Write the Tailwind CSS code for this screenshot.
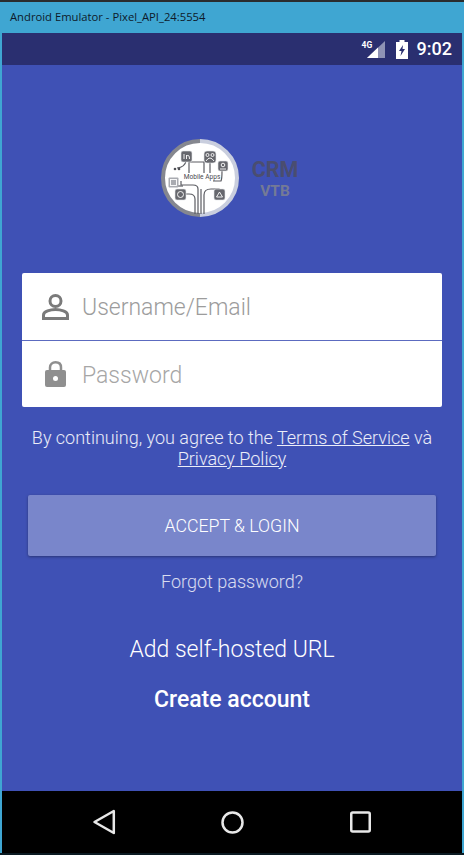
<!DOCTYPE html>
<html lang="en">
<head>
  <meta charset="UTF-8" />
  <meta name="viewport" content="width=device-width, initial-scale=1.0" />
  <title>CRM VTB Login</title>
  <script src="https://cdn.jsdelivr.net/npm/@tailwindcss/browser@4"></script>
</head>
<body class="bg-[#0b1a22] font-['Roboto',sans-serif] overflow-hidden">
  <div class="w-[464px] h-[855px] flex flex-col">
    <!-- Emulator title bar -->
    <div class="h-[2px] bg-[#2a2c2e]"></div>
    <div class="h-[31px] bg-[#3fa6d2] pl-[10px] flex items-center font-['Open_Sans',sans-serif] text-[11.25px] text-[#0e1a2a]">Android Emulator - Pixel_API_24:5554</div>

    <div class="flex-1 flex flex-col border-x-2 border-[#3fa6d2]">
      <!-- Status bar -->
      <div class="h-[32px] bg-[#2a2f70] flex items-center justify-end pr-[10px] text-white">
        <div class="relative w-[18px] h-[17px] mr-[11px]">
          <span class="absolute -left-[5px] top-0 text-[8.5px] font-bold leading-[8px]">4G</span>
          <svg class="absolute left-0 top-0" width="18" height="17" viewBox="0 0 18 17">
            <path d="M0 17 L18 0 V17 Z" fill="#8f93b5" />
            <path d="M0 17 L11 6.600 V17 Z" fill="#fff" />
          </svg>
        </div>
        <svg class="mr-[9px]" width="12" height="19" viewBox="0 0 12 19">
          <path d="M3.500 0 H8.500 V2 H12 V19 H0 V2 H3.500 Z" fill="#fff" />
          <path d="M7 5 L3 11 H5.500 L4.500 16 L9 9 H6.500 Z" fill="#2a2f70" />
        </svg>
        <span class="text-[18px] font-medium leading-none">9:02</span>
      </div>

      <!-- Main screen -->
      <div class="flex-1 bg-[#3f51b5] flex flex-col items-center">
        <!-- Logo -->
        <div class="mt-[74px] h-[78px] w-[420px] pl-[139px] flex items-center">
          <svg width="78" height="78" viewBox="0 0 78 78">
            <circle cx="39" cy="39" r="37" fill="#fff" />
            <path d="M39 2 A37 37 0 0 0 39 76" fill="none" stroke="#85878f" stroke-width="4" />
            <path d="M39 2 A37 37 0 0 1 39 76" fill="none" stroke="#c9cede" stroke-width="4" />
            <g fill="none" stroke="#5c5d63" stroke-width="1.200">
              <path d="M37 75 V50 Q37 46 32 46 H20 V42" />
              <path d="M40 75 V50 M43 75 V56 Q43 50 50 50 H58 V52" />
              <path d="M34 75 V60 Q34 55 28 55 H24" />
              <path d="M28 34 V23 H43 V34" />
              <path d="M49 24 V34" />
              <path d="M61 32 Q61 40 60 42 H52" />
              <path d="M25 22 Q24 28 16 29" />
              <path d="M22 47 H15" />
            </g>
            <text x="41" y="40" text-anchor="middle" font-family="Roboto" font-size="6.600" fill="#4a4a4f">Mobile Apps</text>
            <g fill="#66676d" stroke="#e4e5e9" stroke-width="0.600">
              <rect x="20" y="12" width="11" height="11" rx="2" />
              <rect x="43" y="12" width="12" height="12" rx="3" />
              <rect x="57" y="22" width="10" height="10" rx="2" />
              <rect x="14" y="50" width="11" height="11" rx="2" />
              <rect x="53" y="50" width="11" height="11" rx="2" />
            </g>
            <rect x="7.500" y="38.500" width="10" height="10" rx="1" fill="#a9abb1" />
            <g fill="#4e4f55">
              <circle cx="14" cy="30" r="1.300" />
              <circle cx="18" cy="30" r="1.300" />
            </g>
            <g fill="none" stroke="#fff" stroke-width="0.900">
              <path d="M23 15 V20 M25.500 20 V16 M25.500 17 Q28.500 15 28.500 20" />
              <circle cx="46.500" cy="16" r="1.500" />
              <circle cx="51.500" cy="16" r="1.500" />
              <path d="M45 22 Q49 16 53 22" />
              <circle cx="62" cy="26" r="1.800" />
              <path d="M59 30 H65" />
              <rect x="9.500" y="40.500" width="6" height="6" />
              <circle cx="19.500" cy="55.500" r="3" />
              <path d="M55.500 58 H61.500 L58.500 53 Z" />
            </g>
          </svg>
          <div class="ml-[12px] w-[48px] pt-[1px] flex flex-col items-center font-bold">
            <span class="text-[21.500px] leading-[25.500px] text-[#4a4d70]">CRM</span>
            <span class="text-[15.500px] leading-[18.500px] text-[#747a96]">VTB</span>
          </div>
        </div>

        <!-- Login card -->
        <div class="mt-[56px] w-[420px] bg-white rounded-[2px] flex flex-col">
          <div class="h-[67px] flex items-center">
            <svg class="ml-[20px] w-[27px] h-[26px]" viewBox="0 0 27 26">
              <circle cx="13.500" cy="7" r="5.500" fill="none" stroke="#7a7a7a" stroke-width="3" />
              <path d="M1.500 24.500 V21 C1.500 17.500 8.500 15.500 13.500 15.500 C18.500 15.500 25.500 17.500 25.500 21 V24.500 Z" fill="none" stroke="#7a7a7a" stroke-width="3" />
            </svg>
            <span class="ml-[13px] pt-[3px] text-[23px] font-light text-[#9c9c9c]">Username/Email</span>
          </div>
          <div class="h-px bg-[#5c6bc0]"></div>
          <div class="h-[66px] flex items-center">
            <svg class="ml-[23px] w-[21px] h-[26px]" viewBox="0 0 21 26">
              <path d="M5 10 V6.500 C5 3 7.500 1.300 10.500 1.300 C13.500 1.300 16 3 16 6.500 V10" fill="none" stroke="#8f8f8f" stroke-width="2.500" />
              <rect x="0" y="9" width="21" height="17" rx="2" fill="#8f8f8f" />
              <circle cx="10.500" cy="17.500" r="2.500" fill="#fff" />
            </svg>
            <span class="ml-[16px] pt-[5px] text-[23px] font-light text-[#a6a6a6]">Password</span>
          </div>
        </div>

        <!-- Terms -->
        <p class="mt-[20px] w-[420px] text-center text-[18px] leading-[21px] font-light text-white/90">
          By continuing, you agree to the <a class="underline">Terms of Service</a> và <a class="underline">Privacy Policy</a>
        </p>

        <!-- Accept button -->
        <button class="mt-[26px] w-[408px] h-[61px] pt-[2px] rounded-[2px] bg-[#7986cb] text-white text-[17.750px] font-light shadow-[0_1px_3px_rgba(0,0,0,0.35)]">ACCEPT &amp; LOGIN</button>

        <a class="mt-[15px] text-[18px] leading-[22px] font-light text-white/80">Forgot password?</a>
        <a class="mt-[43px] text-[23px] leading-[28px] font-light text-white">Add self-hosted URL</a>
        <a class="mt-[22px] text-[23px] leading-[28px] font-medium text-white">Create account</a>
      </div>

      <!-- Android nav bar -->
      <div class="h-[62px] bg-black flex items-center justify-center gap-[105px]">
        <svg width="23" height="26" viewBox="0 0 23 26">
          <path d="M20.800 2 V24 L1.500 13 Z" fill="none" stroke="#e8e8e8" stroke-width="2.500" stroke-linejoin="round" />
        </svg>
        <svg width="23" height="23" viewBox="0 0 23 23">
          <circle cx="11.500" cy="11.500" r="10" fill="none" stroke="#e8e8e8" stroke-width="2.500" />
        </svg>
        <svg width="22" height="22" viewBox="0 0 22 22">
          <rect x="2.250" y="1.500" width="18.500" height="19" rx="1.500" fill="none" stroke="#e8e8e8" stroke-width="2.500" />
        </svg>
      </div>
    </div>
    <div class="h-[2px] bg-[#0b1a22]"></div>
  </div>
</body>
</html>
